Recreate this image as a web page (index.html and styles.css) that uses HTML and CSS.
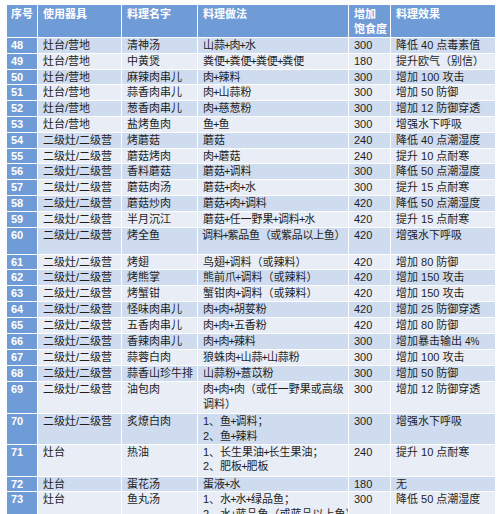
FILE: index.html
```html
<!DOCTYPE html>
<html lang="zh">
<head>
<meta charset="utf-8">
<link rel="stylesheet" href="styles.css">
</head>
<body>
<div class="wrap">
<table class="recipes">
<colgroup>
<col class="c-no"><col class="c-tool"><col class="c-name"><col class="c-how"><col class="c-sat"><col class="c-eff">
</colgroup>
<thead>
<tr><th>序号</th><th>使用器具</th><th>料理名字</th><th>料理做法</th><th>增加<br>饱食度</th><th>料理效果</th></tr>
</thead>
<tbody>
<tr><td>48</td><td>灶台/营地</td><td>清神汤</td><td>山蒜<b class="p">+</b>肉<b class="p">+</b>水</td><td>300</td><td>降低 40 点毒素值</td></tr>
<tr><td>49</td><td>灶台/营地</td><td>中黄煲</td><td>粪便<b class="p">+</b>粪便<b class="p">+</b>粪便<b class="p">+</b>粪便</td><td>180</td><td>提升欧气（别信）</td></tr>
<tr><td>50</td><td>灶台/营地</td><td>麻辣肉串儿</td><td>肉<b class="p">+</b>辣料</td><td>300</td><td>增加 100 攻击</td></tr>
<tr><td>51</td><td>灶台/营地</td><td>蒜香肉串儿</td><td>肉<b class="p">+</b>山蒜粉</td><td>300</td><td>增加 50 防御</td></tr>
<tr><td>52</td><td>灶台/营地</td><td>葱香肉串儿</td><td>肉<b class="p">+</b>慈葱粉</td><td>300</td><td>增加 12 防御穿透</td></tr>
<tr><td>53</td><td>灶台/营地</td><td>盐烤鱼肉</td><td>鱼<b class="p">+</b>鱼</td><td>300</td><td>增强水下呼吸</td></tr>
<tr><td>54</td><td>二级灶/二级营</td><td>烤蘑菇</td><td>蘑菇</td><td>240</td><td>降低 40 点潮湿度</td></tr>
<tr><td>55</td><td>二级灶/二级营</td><td>蘑菇烤肉</td><td>肉<b class="p">+</b>蘑菇</td><td>240</td><td>提升 10 点耐寒</td></tr>
<tr><td>56</td><td>二级灶/二级营</td><td>香料蘑菇</td><td>蘑菇<b class="p">+</b>调料</td><td>300</td><td>降低 50 点潮湿度</td></tr>
<tr><td>57</td><td>二级灶/二级营</td><td>蘑菇肉汤</td><td>蘑菇<b class="p">+</b>肉<b class="p">+</b>水</td><td>300</td><td>提升 15 点耐寒</td></tr>
<tr><td>58</td><td>二级灶/二级营</td><td>蘑菇炒肉</td><td>蘑菇<b class="p">+</b>肉<b class="p">+</b>调料</td><td>420</td><td>降低 50 点潮湿度</td></tr>
<tr><td>59</td><td>二级灶/二级营</td><td>半月沉江</td><td>蘑菇<b class="p">+</b>任一野果<b class="p">+</b>调料<b class="p">+</b>水</td><td>420</td><td>提升 15 点耐寒</td></tr>
<tr class="tall"><td>60</td><td>二级灶/二级营</td><td>烤全鱼</td><td class="tight">调料<b class="p">+</b>紫品鱼（或紫品以上鱼）</td><td>420</td><td>增强水下呼吸</td></tr>
<tr><td>61</td><td>二级灶/二级营</td><td>烤翅</td><td>鸟翅<b class="p">+</b>调料（或辣料）</td><td>420</td><td>增加 80 防御</td></tr>
<tr><td>62</td><td>二级灶/二级营</td><td>烤熊掌</td><td>熊前爪<b class="p">+</b>调料（或辣料）</td><td>420</td><td>增加 150 攻击</td></tr>
<tr><td>63</td><td>二级灶/二级营</td><td>烤蟹钳</td><td>蟹钳肉<b class="p">+</b>调料（或辣料）</td><td>420</td><td>增加 150 攻击</td></tr>
<tr><td>64</td><td>二级灶/二级营</td><td>怪味肉串儿</td><td>肉<b class="p">+</b>肉<b class="p">+</b>胡荽粉</td><td>420</td><td>增加 25 防御穿透</td></tr>
<tr><td>65</td><td>二级灶/二级营</td><td>五香肉串儿</td><td>肉<b class="p">+</b>肉<b class="p">+</b>五香粉</td><td>420</td><td>增加 80 防御</td></tr>
<tr><td>66</td><td>二级灶/二级营</td><td>香辣肉串儿</td><td>肉<b class="p">+</b>肉<b class="p">+</b>辣料</td><td>300</td><td>增加暴击输出 <span class="small">4%</span></td></tr>
<tr><td>67</td><td>二级灶/二级营</td><td>蒜蓉白肉</td><td>狼蛛肉<b class="p">+</b>山蒜<b class="p">+</b>山蒜粉</td><td>300</td><td>增加 100 攻击</td></tr>
<tr><td>68</td><td>二级灶/二级营</td><td>蒜香山珍牛排</td><td>山蒜粉<b class="p">+</b>薏苡粉</td><td>300</td><td>增加 50 防御</td></tr>
<tr class="double"><td>69</td><td>二级灶/二级营</td><td>油包肉</td><td>肉<b class="p">+</b>肉<b class="p">+</b>肉（或任一野果或高级<br>调料）</td><td>300</td><td>增加 12 防御穿透</td></tr>
<tr class="double short"><td>70</td><td>二级灶/二级营</td><td>炙燎白肉</td><td>1、鱼<b class="p">+</b>调料；<br>2、鱼<b class="p">+</b>辣料</td><td>300</td><td>增强水下呼吸</td></tr>
<tr class="double"><td>71</td><td>灶台</td><td>热油</td><td>1、长生果油<b class="p">+</b>长生果油；<br>2、肥板<b class="p">+</b>肥板</td><td>240</td><td>提升 10 点耐寒</td></tr>
<tr class="thin"><td>72</td><td>灶台</td><td>蛋花汤</td><td>蛋液<b class="p">+</b>水</td><td>180</td><td>无</td></tr>
<tr class="double"><td>73</td><td>灶台</td><td>鱼丸汤</td><td>1、水<b class="p">+</b>水<b class="p">+</b>绿品鱼；<br>2、水<b class="p">+</b>蓝品鱼（或蓝品以上鱼）</td><td>300</td><td>降低 50 点潮湿度</td></tr>
</tbody>
</table>
</div>
</body>
</html>
```

FILE: styles.css
```css
html, body {
  margin: 0;
  padding: 0;
  background: #ffffff;
}

.wrap {
  padding: 4px 5px 0 6px;
}

.recipes {
  border-collapse: collapse;
  table-layout: fixed;
  width: 489px;
  font-family: "Liberation Sans", "Noto Sans CJK SC", sans-serif;
  font-size: 11px;
  color: #1e1e1e;
}

.c-no { width: 31px; }
.c-tool { width: 84px; }
.c-name { width: 76px; }
.c-how { width: 151px; }
.c-sat { width: 42px; }
.c-eff { width: 105px; }

.recipes th,
.recipes td {
  border: 1px solid #ffffff;
  padding: 0 0 0 5px;
  text-align: left;
  vertical-align: top;
  white-space: nowrap;
  overflow: hidden;
  line-height: 14.8px;
}

.recipes th {
  background: #6f9bd6;
  color: #ffffff;
  font-weight: bold;
  height: 29px;
  padding-top: 2px;
  line-height: 15px;
}

.recipes td:first-child,
.recipes th:first-child {
  padding-left: 4px;
}

.recipes td:first-child {
  color: #ffffff;
  font-weight: bold;
}

.recipes tbody tr:nth-child(odd) td {
  background: #cfdcf0;
}

.recipes tbody tr:nth-child(even) td {
  background: #e8edf6;
}

.recipes tbody tr td:first-child {
  background: #6f9bd6;
}

.recipes td.tight {
  letter-spacing: -0.3px;
  padding-left: 4px;
}

.recipes tr.tall td {
  height: 26px;
}

.recipes tr.double td {
  height: 31px;
}

.recipes tr.double.short td {
  height: 28px;
}

.recipes tr.thin td {
  height: 13px;
}

.p {
  font-weight: normal;
  margin: 0 -1px;
}

.small {
  font-size: 10px;
}
```
